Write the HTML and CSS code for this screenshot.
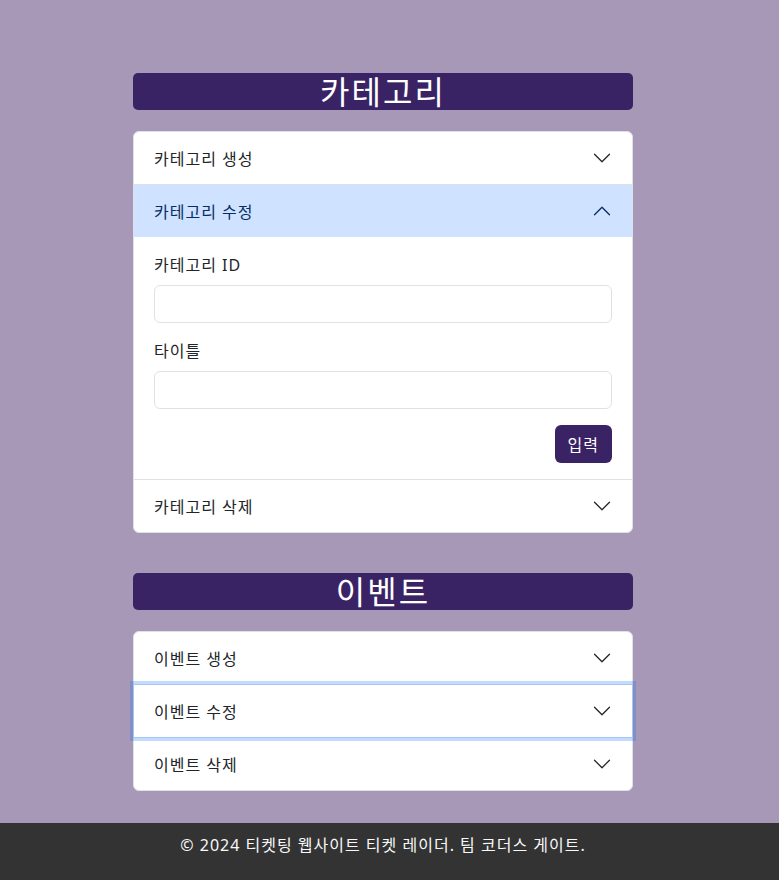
FILE: index.html
```html
<!DOCTYPE html>
<html lang="ko">
<head>
    <meta charset="utf-8">
    <meta name="viewport" content="width=device-width, initial-scale=1.0">
    <title>티켓 레이더 - 관리</title>
    <link rel="stylesheet" href="styles.css">
</head>
<body>
    <main class="admin">
        <section class="panel">
            <h2 class="panel-title">카테고리</h2>
            <div class="accordion">
                <div class="acc-item">
                    <button class="acc-btn" type="button">
                        <span>카테고리 생성</span>
                        <svg class="chev" viewBox="0 0 16 16"><path d="M2 5L8 11L14 5"/></svg>
                    </button>
                </div>
                <div class="acc-item">
                    <button class="acc-btn open" type="button">
                        <span>카테고리 수정</span>
                        <svg class="chev" viewBox="0 0 16 16"><path d="M2 5L8 11L14 5"/></svg>
                    </button>
                    <div class="acc-body">
                        <div class="field">
                            <label for="catId">카테고리 ID</label>
                            <input id="catId" type="text">
                        </div>
                        <div class="field">
                            <label for="catTitle">타이틀</label>
                            <input id="catTitle" type="text">
                        </div>
                        <div class="actions">
                            <button class="submit" type="button">입력</button>
                        </div>
                    </div>
                </div>
                <div class="acc-item">
                    <button class="acc-btn" type="button">
                        <span>카테고리 삭제</span>
                        <svg class="chev" viewBox="0 0 16 16"><path d="M2 5L8 11L14 5"/></svg>
                    </button>
                </div>
            </div>
        </section>

        <section class="panel">
            <h2 class="panel-title">이벤트</h2>
            <div class="accordion">
                <div class="acc-item">
                    <button class="acc-btn" type="button">
                        <span>이벤트 생성</span>
                        <svg class="chev" viewBox="0 0 16 16"><path d="M2 5L8 11L14 5"/></svg>
                    </button>
                </div>
                <div class="acc-item">
                    <button class="acc-btn focused" type="button">
                        <span>이벤트 수정</span>
                        <svg class="chev" viewBox="0 0 16 16"><path d="M2 5L8 11L14 5"/></svg>
                    </button>
                </div>
                <div class="acc-item">
                    <button class="acc-btn" type="button">
                        <span>이벤트 삭제</span>
                        <svg class="chev" viewBox="0 0 16 16"><path d="M2 5L8 11L14 5"/></svg>
                    </button>
                </div>
            </div>
        </section>
    </main>

    <footer class="site-footer">
        <p>© 2024 티켓팅 웹사이트 티켓 레이더. 팀 코더스 게이트.</p>
    </footer>
</body>
</html>
```

FILE: styles.css
```css
body {
    margin: 0;
    background-color: #a898b8;
    font-family: "Noto Sans", "Noto Sans CJK KR", sans-serif;
    font-size: 16px;
    color: #212529;
}

.admin {
    width: 500px;
    margin: 0 auto;
    padding: 73px 13px 32px 0;
}

.panel {
    margin-bottom: 40px;
}
.panel:last-child {
    margin-bottom: 0;
}

.panel-title {
    margin: 0 0 21px;
    height: 37px;
    line-height: 37px;
    background-color: #3a2364;
    color: #ffffff;
    border-radius: 5px;
    text-align: center;
    font-size: 32px;
    font-weight: 400;
    letter-spacing: 2px;
}

.accordion {
    background-color: #ffffff;
    border: 1px solid #dee2e6;
    border-radius: 6px;
}

.acc-item + .acc-item {
    border-top: 1px solid #dee2e6;
}

.acc-btn {
    position: relative;
    display: flex;
    align-items: center;
    justify-content: space-between;
    width: 100%;
    height: 52px;
    padding: 0 20px;
    border: none;
    background-color: transparent;
    font-family: inherit;
    font-size: 16px;
    letter-spacing: 1px;
    color: #212529;
    text-align: left;
    cursor: pointer;
}
.acc-item:first-child .acc-btn {
    border-radius: 5px 5px 0 0;
}
.acc-item:last-child .acc-btn {
    border-radius: 0 0 5px 5px;
}

.acc-btn.open {
    background-color: #cfe2ff;
    color: #052c65;
}
.acc-btn.focused {
    z-index: 3;
    box-shadow: 0 0 0 4px rgba(13, 110, 253, 0.25);
}

.chev {
    width: 20px;
    height: 20px;
    fill: none;
    stroke: #212529;
    stroke-linecap: round;
    stroke-linejoin: round;
}
.acc-btn.open .chev {
    stroke: #052c65;
    transform: rotate(180deg);
}

.acc-body {
    padding: 16px 20px;
}

.field {
    margin-bottom: 16px;
}
.field label {
    display: block;
    margin-bottom: 8px;
    line-height: 24px;
    letter-spacing: 1px;
}
.field input {
    display: block;
    box-sizing: border-box;
    width: 100%;
    height: 38px;
    padding: 6px 12px;
    border: 1px solid #dee2e6;
    border-radius: 6px;
    font-family: inherit;
    font-size: 16px;
}

.actions {
    display: flex;
    justify-content: flex-end;
}
.submit {
    height: 38px;
    padding: 0 13px;
    border: none;
    border-radius: 6px;
    background-color: #3a2364;
    color: #ffffff;
    font-family: inherit;
    font-size: 16px;
    letter-spacing: 1px;
    cursor: pointer;
}

.site-footer {
    background-color: #333333;
    color: #f8f9fa;
    text-align: center;
    padding: 10px 13px 23px 0;
}
.site-footer p {
    margin: 0;
    line-height: 24px;
    letter-spacing: 1px;
}
```
